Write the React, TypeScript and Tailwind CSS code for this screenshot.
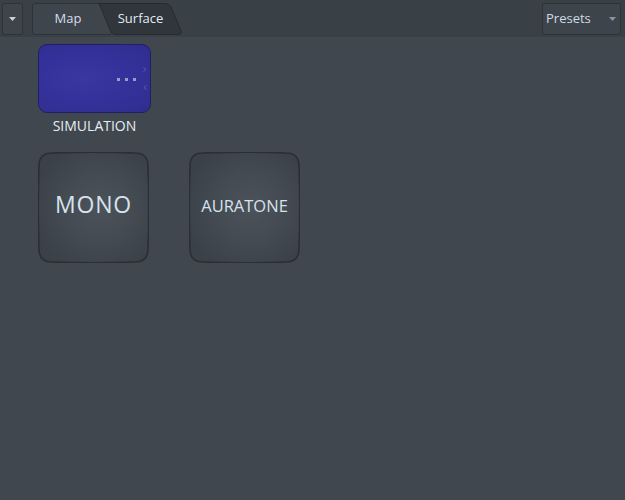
import React from "react";

function Caret({ className = "" }: { className?: string }) {
  return (
    <svg width="7" height="4" viewBox="0 0 7 4" className={className}>
      <path d="M0 0 L7 0 L3.5 4 Z" fill="currentColor" />
    </svg>
  );
}

function SquareButton({ label, big }: { label: string; big?: boolean }) {
  return (
    <div className="w-[111px] h-[111px] relative flex items-center justify-center">
      <svg className="absolute inset-0" width="111" height="111" viewBox="0 0 111 111">
        <defs>
          <radialGradient id={"g" + label} cx="55%" cy="50%" r="60%">
            <stop offset="0%" stopColor="#4b525a" />
            <stop offset="50%" stopColor="#444b52" />
            <stop offset="100%" stopColor="#3b4148" />
          </radialGradient>
        </defs>
        <path
          d="M14 1 Q55.5 -0.5 97 1 Q110 1 110 14 Q111.5 55.5 110 97 Q110 110 97 110 Q55.5 111.5 14 110 Q1 110 1 97 Q-0.5 55.5 1 14 Q1 1 14 1 Z"
          fill={"url(#g" + label + ")"}
          stroke="#2a2f34"
          strokeWidth="1.6"
        />
      </svg>
      <span
        className={
          big
            ? "relative mb-[6px] text-[23px] text-[#d6e2ec] tracking-[0.8px]"
            : "relative mb-[2px] text-[16.5px] text-[#d6e2ec]"
        }
        style={{ fontFamily: '"Open Sans", "Noto Sans", sans-serif' }}
      >
        {label}
      </span>
    </div>
  );
}

export default function App() {
  return (
    <div
      className="w-[625px] h-[500px] bg-[#40474e] flex flex-col"
      style={{ fontFamily: '"Open Sans", "Noto Sans", sans-serif' }}
    >
      <div className="h-[37px] bg-[#394046] flex items-start pt-[3px] px-[2px] relative">
        <div className="w-[21px] h-[32px] rounded-[2px] border border-[#2e3338] bg-[#3d444b] flex items-center justify-center text-[#c9d0d6]">
          <Caret />
        </div>
        <div className="ml-[9px] h-[32px] w-[149px] relative">
          <div className="absolute left-0 top-0 bottom-0 w-[80px] rounded-[3px] border border-[#2e3338] bg-[#3e454c]" />
          <svg
            className="absolute left-[64px] top-0"
            width="86"
            height="32"
            viewBox="0 0 86 32"
          >
            <path
              d="M3 0.5 L69 0.5 Q73 0.5 75 4 L85 28 Q86 31.5 82 31.5 L20 31.5 Q17 31.5 15 29 Z"
              fill="#30363c"
              stroke="#262b30"
            />
          </svg>
          <div className="absolute left-0 top-0 h-full w-[72px] flex items-center justify-center text-[13px] text-[#d4dee8]">
            Map
          </div>
          <div className="absolute left-[84px] top-0 h-full w-[49px] flex items-center justify-center text-[13px] font-medium text-[#e4ecf2]">
            Surface
          </div>
        </div>
        <div className="ml-auto w-[79px] h-[32px] rounded-[2px] border border-[#2e3338] bg-[#3d444b] flex items-center pl-[3px] pr-[4px] mr-[2px]">
          <span className="text-[13px] text-[#d0dae3]">Presets</span>
          <Caret className="ml-auto text-[#8a939b]" />
        </div>
      </div>

      <div className="pl-[38px] pt-[7px] flex flex-col">
        <div className="w-[113px] flex flex-col items-center">
          <div
            className="w-[113px] h-[69px] rounded-[9px] border border-[#1f1f66] relative"
            style={{
              background:
                "radial-gradient(ellipse at 40% 50%, #3a37a0 0%, #34329a 50%, #2f2d8e 100%)",
            }}
          >
            <div className="absolute right-[14px] top-[33px] flex gap-[5px]">
              <div className="w-[3px] h-[3px] bg-[#9d9bc4]" />
              <div className="w-[3px] h-[3px] bg-[#9d9bc4]" />
              <div className="w-[3px] h-[3px] bg-[#9d9bc4]" />
            </div>
            <svg className="absolute right-[3px] top-[22px]" width="4" height="5" viewBox="0 0 4 5">
              <path d="M0.5 0.5 L3 2.5 L0.5 4.5" stroke="#5c5ab0" fill="none" />
            </svg>
            <svg className="absolute right-[3px] top-[40px]" width="4" height="5" viewBox="0 0 4 5">
              <path d="M3.5 0.5 L1 2.5 L3.5 4.5" stroke="#5c5ab0" fill="none" />
            </svg>
          </div>
          <div className="mt-[4px] text-[14px] text-[#e6ecf1] leading-[18px]">SIMULATION</div>
        </div>

        <div className="mt-[17px] flex gap-[40px]">
          <SquareButton label="MONO" big />
          <SquareButton label="AURATONE" />
        </div>
      </div>
    </div>
  );
}
